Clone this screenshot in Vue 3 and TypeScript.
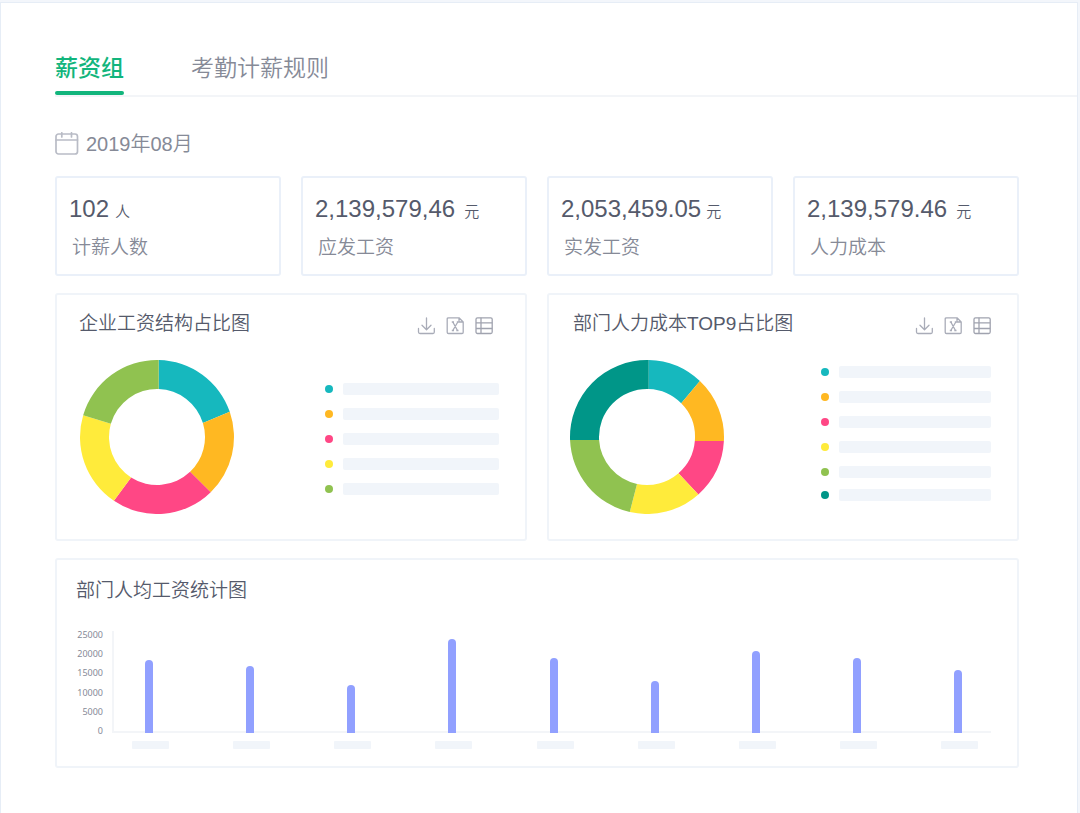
<script setup lang="ts">
import { ref } from 'vue'

type Point = [number, number]
interface Slice { color: string; outer: Point; inner: Point }
interface Panel { id: string; title: string; slices: Slice[] }

const TEAL = '#16b8be'
const AMBER = '#ffb822'
const PINK = '#ff4785'
const YELLOW = '#ffeb3b'
const GREEN = '#90c250'
const DEEP = '#009688'

const tabs = ['薪资组', '考勤计薪规则']
const active = ref(0)

const stats = [
  { value: '102', unit: '人', label: '计薪人数', gap: 'mid' },
  { value: '2,139,579,46', unit: '元', label: '应发工资', gap: 'wide' },
  { value: '2,053,459.05', unit: '元', label: '实发工资', gap: 'tight' },
  { value: '2,139,579.46', unit: '元', label: '人力成本', gap: 'wide' },
]

// Each slice starts at the edge running between its outer and inner point.
const panels: Panel[] = [
  {
    id: 'structure',
    title: '企业工资结构占比图',
    slices: [
      { color: TEAL, outer: [78.7, 0], inner: [78.7, 29] },
      { color: AMBER, outer: [149.3, 52], inner: [123, 63] },
      { color: PINK, outer: [130.3, 131.7], inner: [110.3, 112] },
      { color: YELLOW, outer: [34, 140.7], inner: [50.7, 118] },
      { color: GREEN, outer: [2.7, 55], inner: [30.3, 63.7] },
    ],
  },
  {
    id: 'department',
    title: '部门人力成本TOP9占比图',
    slices: [
      { color: TEAL, outer: [78.7, 0], inner: [78.7, 29] },
      { color: AMBER, outer: [129.3, 21.7], inner: [111.3, 43.3] },
      { color: PINK, outer: [153.3, 81], inner: [124.7, 81] },
      { color: YELLOW, outer: [128, 134], inner: [108.3, 113] },
      { color: GREEN, outer: [59.7, 152.3], inner: [67, 124] },
      { color: DEEP, outer: [0, 80], inner: [28.7, 80] },
    ],
  },
]

const C = 77
const R_OUT = 77
const R_IN = 48

function onRing([x, y]: Point, r: number): string {
  const a = Math.atan2(y - C, x - C)
  return `${(C + r * Math.cos(a)).toFixed(2)} ${(C + r * Math.sin(a)).toFixed(2)}`
}

function slicePath(slices: Slice[], i: number): string {
  const from = slices[i]
  const to = slices[(i + 1) % slices.length]
  return `M${onRing(from.outer, R_OUT)} A${R_OUT} ${R_OUT} 0 0 1 ${onRing(to.outer, R_OUT)} `
    + `L${onRing(to.inner, R_IN)} A${R_IN} ${R_IN} 0 0 0 ${onRing(from.inner, R_IN)}Z`
}

const ticks = [25000, 20000, 15000, 10000, 5000, 0]
const bars = [73, 67, 48, 94, 75, 52, 82, 75, 63]
</script>

<template>
  <div class="page">
    <main class="sheet">
      <nav class="tabs">
        <button
          v-for="(tab, i) in tabs"
          :key="tab"
          type="button"
          class="tab"
          :class="{ active: active === i }"
          @click="active = i"
        >{{ tab }}</button>
      </nav>

      <div class="content">
        <button type="button" class="month">
          <svg class="calendar" viewBox="0 0 24 24" fill="none" stroke="#b9bcc6" stroke-width="1.7" stroke-linecap="round" aria-hidden="true">
            <rect x="1" y="2" width="21.500" height="20" rx="2.5" />
            <path d="M1 8H22.500M6.800 .8V5M16.500 .8V5" />
          </svg>
          <span>2019年08月</span>
        </button>

        <section class="stats">
          <article v-for="s in stats" :key="s.label" class="card stat">
            <p class="figure" :class="s.gap"><span>{{ s.value }}</span><small>{{ s.unit }}</small></p>
            <p class="label">{{ s.label }}</p>
          </article>
        </section>

        <section class="panels">
          <article v-for="p in panels" :key="p.id" class="card panel" :class="p.id">
            <header class="panel-head">
              <h2>{{ p.title }}</h2>
              <div class="tools">
                <button type="button" aria-label="下载">
                  <svg viewBox="0 0 18 18" fill="none" stroke="#a9acb8" stroke-width="1.3" stroke-linecap="round" stroke-linejoin="round">
                    <path d="M9.500 1V12.500M5 8.300L9.500 12.700L14 8.300M1.500 11.500V15Q1.500 16.500 3 16.500H16Q17.300 16.500 17.300 15V11.500" />
                  </svg>
                </button>
                <button type="button" aria-label="导出表格">
                  <svg viewBox="0 0 18 18" fill="none" stroke="#a9acb8" stroke-width="1.3" stroke-linejoin="round">
                    <path d="M13 .8H2.500Q1.200 .8 1.200 2V15.300Q1.200 16.500 2.500 16.500H16Q17.200 16.500 17.200 15.300V5ZM13 .8V5H17.200" />
                    <path d="M6.800 5L11.500 13.500M11.800 5L6.800 13.500M5.800 5H8M10.800 5H12.800M5.800 13.500H8M10.300 13.500H12.500" />
                  </svg>
                </button>
                <button type="button" aria-label="列表">
                  <svg viewBox="0 0 18 18" fill="none" stroke="#a0a3af" stroke-width="1.3">
                    <rect x="1" y=".8" width="16.200" height="15.700" rx="1.5" />
                    <path d="M6 .8V16.500M1 5.800H17.200M1 11.500H17.200" />
                  </svg>
                </button>
              </div>
            </header>
            <div class="panel-body">
              <svg class="donut" viewBox="0 0 154 154" role="img" :aria-label="p.title">
                <path v-for="(s, i) in p.slices" :key="i" :d="slicePath(p.slices, i)" :fill="s.color" />
              </svg>
              <ul class="legend">
                <li v-for="(s, i) in p.slices" :key="i">
                  <i class="dot" :style="{ background: s.color }"></i>
                  <span class="bone"></span>
                </li>
              </ul>
            </div>
          </article>
        </section>

        <section class="card average">
          <h2>部门人均工资统计图</h2>
          <div class="chart">
            <ol class="ticks">
              <li v-for="t in ticks" :key="t">{{ t }}</li>
            </ol>
            <div class="plot">
              <div class="columns">
                <div v-for="(h, i) in bars" :key="i" class="slot">
                  <span class="bar" :style="{ height: h + 'px' }"></span>
                </div>
              </div>
              <div class="names">
                <span v-for="(h, i) in bars" :key="i" class="name"></span>
              </div>
            </div>
          </div>
        </section>
      </div>
    </main>
  </div>
</template>

<style>
body {
  margin: 0;
  background: #f3f6fb;
}
</style>

<style scoped>
* {
  box-sizing: border-box;
}
.page {
  min-height: 100vh;
  padding: 2px 2px 0 0;
  display: flex;
  font-family: "Liberation Sans", "Noto Sans CJK SC", sans-serif;
  font-weight: 350;
  color: #555a6b;
}
.sheet {
  flex: 1;
  min-width: 0;
  padding: 44px 0 0 54px;
  background: #fff;
  border: 1px solid #e6edf6;
  border-bottom: 0;
}
button {
  padding: 0;
  border: 0;
  background: none;
  font: inherit;
  color: inherit;
  cursor: pointer;
}
h2, p, ul, ol {
  margin: 0;
  padding: 0;
  font-weight: 350;
  list-style: none;
}
.tabs {
  display: flex;
  gap: 67px;
  height: 50px;
  border-bottom: 2px solid #f3f5f8;
}
.tab {
  height: 48px;
  padding-bottom: 3px;
  border-bottom: 4px solid transparent;
  font-size: 23px;
  line-height: 38px;
  color: #868a97;
}
.tab.active {
  position: relative;
  padding-bottom: 6px;
  font-family: "Noto Sans CJK SC", sans-serif;
  font-weight: 500;
  color: #12b57c;
}
.tab.active::after {
  content: "";
  position: absolute;
  left: 0;
  right: 0;
  bottom: -4px;
  height: 4px;
  border-radius: 2px;
  background: #12b57c;
}
.content {
  padding: 32px 58px 45px 0;
}
.month {
  display: flex;
  align-items: center;
  gap: 7px;
  height: 30px;
  font-size: 20px;
  line-height: 30px;
  color: #868a97;
}
.calendar {
  width: 24px;
  height: 24px;
}
.card {
  border: 2px solid #eaf0f9;
  border-radius: 3px;
}
.stats {
  display: grid;
  grid-template-columns: repeat(4, 1fr);
  gap: 20px;
  margin-top: 17px;
}
.stat {
  height: 100px;
  padding: 15px 12px 0;
}
.figure {
  display: flex;
  align-items: baseline;
  font-size: 24px;
  line-height: 32px;
}
.figure small {
  font-size: 15px;
  line-height: 24px;
}
.figure.tight {
  gap: 5px;
}
.figure.mid {
  gap: 6px;
}
.figure.wide {
  gap: 9px;
}
.label {
  padding-left: 3px;
  margin-top: 10px;
  font-size: 19px;
  line-height: 26px;
  color: #868a97;
}
.panels {
  display: grid;
  grid-template-columns: 1fr 1fr;
  gap: 20px;
  margin-top: 17px;
}
.panel {
  height: 248px;
  padding: 16px 26px 0 22px;
  border-color: #f0f4f9;
}
.department.panel {
  padding-left: 21px;
}
.panel-head {
  display: flex;
  justify-content: space-between;
  height: 30px;
}
h2 {
  font-size: 19px;
  line-height: 26px;
}
.department h2 {
  padding-left: 3px;
}
.tools {
  display: flex;
  gap: 11px;
  padding-top: 6px;
}
.structure .tools {
  padding-right: 6px;
}
.tools button {
  width: 18px;
  height: 18px;
}
.tools svg {
  display: block;
  width: 18px;
  height: 18px;
}
.panel-body {
  display: flex;
  justify-content: space-between;
  padding-top: 19px;
}
.donut {
  width: 154px;
  height: 154px;
}
.structure .donut {
  margin-left: 1px;
}
.legend {
  display: grid;
  gap: 13px;
  align-content: start;
  padding-top: 23px;
}
.department .legend {
  padding-top: 6px;
}
.legend li {
  display: flex;
  align-items: center;
  gap: 10px;
}
.department .legend li:last-child {
  margin-top: -2px;
}
.dot {
  width: 8px;
  height: 8px;
  border-radius: 50%;
}
.bone {
  width: 156px;
  height: 12px;
  border-radius: 2px;
  background: #f1f5fa;
}
.department .bone {
  width: 152px;
}
.average {
  margin-top: 17px;
  padding: 18px 26px 17px 19px;
  border-color: #f0f4f9;
}
.chart {
  display: flex;
  gap: 9px;
  margin-top: 25px;
}
.ticks {
  display: flex;
  flex-direction: column;
  justify-content: space-between;
  width: 27px;
  height: 108px;
  font-family: "Noto Sans", sans-serif;
  font-size: 9px;
  line-height: 12px;
  font-weight: 400;
  text-align: right;
  color: #868a97;
}
.plot {
  flex: 1;
  padding-top: 2px;
}
.columns {
  display: flex;
  justify-content: space-between;
  align-items: flex-end;
  height: 102px;
  padding: 0 13px 0 18px;
  border-left: 2px solid #f3f5f8;
  background: linear-gradient(#f3f5f8, #f3f5f8) bottom / 100% 2px no-repeat;
}
.slot {
  width: 37px;
  padding-left: 13px;
}
.bar {
  display: block;
  width: 8px;
  border-radius: 4px 4px 0 0;
  background: #91a0ff;
}
.names {
  display: flex;
  justify-content: space-between;
  padding: 8px 13px 0 20px;
}
.name {
  width: 37px;
  height: 8px;
  border-radius: 1px;
  background: #f1f5fa;
}
</style>
